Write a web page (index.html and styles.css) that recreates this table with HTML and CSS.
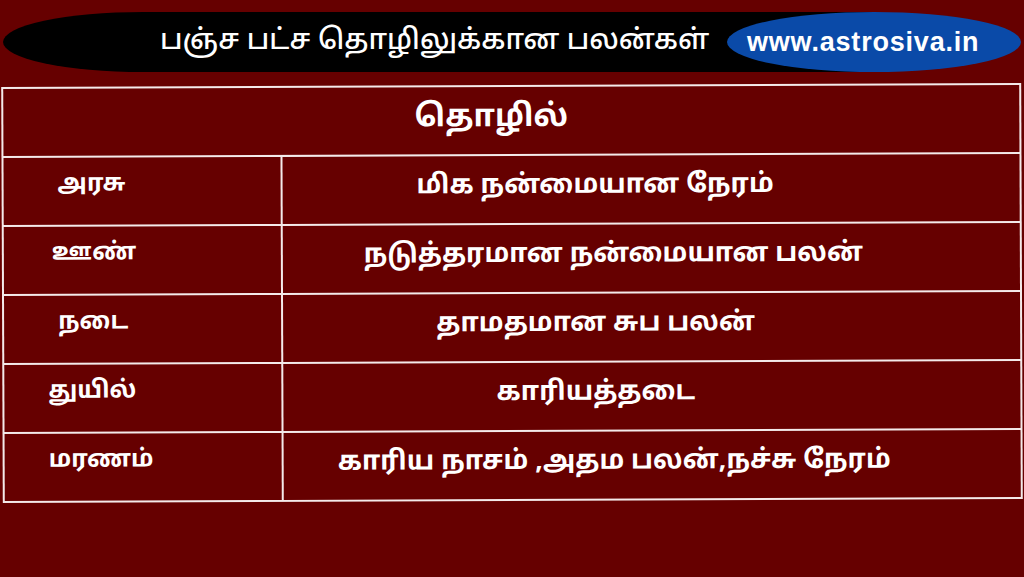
FILE: index.html
```html
<!DOCTYPE html>
<html lang="ta">
<head>
<meta charset="utf-8">
<title>பஞ்ச பட்ச தொழிலுக்கான பலன்கள்</title>
<link rel="stylesheet" href="styles.css">
</head>
<body>
<div class="page">
  <header class="banner">
    <div class="banner-black">
      <h1 class="banner-title">பஞ்ச பட்ச தொழிலுக்கான பலன்கள்</h1>
    </div>
    <div class="banner-blue">www.astrosiva.in</div>
  </header>
  <div class="table">
    <div class="cell head">தொழில்</div>
    <div class="cell left l1">அரசு</div>
    <div class="cell right">மிக நன்மையான நேரம்</div>
    <div class="cell left l2">ஊண்</div>
    <div class="cell right wide">நடுத்தரமான நன்மையான பலன்</div>
    <div class="cell left l1">நடை</div>
    <div class="cell right">தாமதமான சுப பலன்</div>
    <div class="cell left l3">துயில்</div>
    <div class="cell right">காரியத்தடை</div>
    <div class="cell left l3">மரணம்</div>
    <div class="cell right wide">காரிய நாசம் ,அதம பலன்,நச்சு நேரம்</div>
  </div>
</div>
</body>
</html>
```
FILE: styles.css
```css
html, body {
  margin: 0;
  padding: 0;
  background: #660000;
}
body {
  width: 1024px;
  height: 577px;
  overflow: hidden;
  font-family: "Noto Sans Tamil", "Noto Sans", "Liberation Sans", sans-serif;
  color: #ffffff;
}
.page {
  padding-top: 12px;
}
.banner {
  display: flex;
  height: 60px;
  padding-left: 3px;
}
.banner-black {
  width: 870px;
  height: 60px;
  background: #000000;
  border-radius: 140px 0 0 140px / 30px 0 0 30px;
  display: flex;
  align-items: center;
}
.banner-title {
  margin: 0 0 0 157px;
  font-size: 28.4px;
  font-weight: 500;
  line-height: 1;
  white-space: nowrap;
}
.banner-blue {
  width: 294px;
  height: 60px;
  margin-left: -146px;
  background: #0a4aa8;
  border-radius: 50%;
  display: flex;
  align-items: center;
  padding-left: 20px;
  box-sizing: border-box;
  font-family: "Liberation Sans", sans-serif;
  font-weight: 700;
  font-size: 27px;
  letter-spacing: 0.8px;
}
.table {
  margin: 13px 0 0 2px;
  width: 1020px;
  display: grid;
  grid-template-columns: 277px 1fr;
  grid-auto-rows: 67px;
  gap: 2px;
  padding: 2px;
  box-sizing: border-box;
  background: #f4eaea;
  transform: rotate(-0.22deg);
}
.cell {
  background: #660000;
  display: flex;
  align-items: center;
  font-weight: 700;
  white-space: nowrap;
}
.head {
  grid-column: 1 / 3;
  justify-content: center;
  font-size: 31px;
  padding-right: 40px;
  padding-bottom: 6px;
}
.left {
  font-size: 24px;
  padding-bottom: 14px;
}
.l1 {
  padding-left: 54px;
}
.l2 {
  padding-left: 48px;
}
.l3 {
  padding-left: 44px;
}
.right {
  justify-content: center;
  font-size: 26.5px;
  padding-right: 112px;
  padding-bottom: 6px;
}
.right.wide {
  padding-right: 76px;
}
```
